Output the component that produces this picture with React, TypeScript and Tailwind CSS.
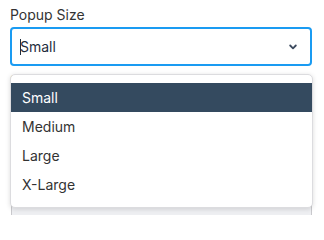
import React from "react";

export default function App() {
  const options = ["Small", "Medium", "Large", "X-Large"];
  return (
    <div
      className="relative h-[215px] w-[324px] overflow-hidden bg-white"
      style={{ fontFamily: "Inter, 'Liberation Sans', sans-serif" }}
    >
      <div className="flex flex-col pl-[10px] pt-[5px]">
        <div className="text-[14px] leading-[20px] text-[#333333]">Popup Size</div>
        <div className="mt-[2px] flex h-[39px] w-[302px] items-center rounded-[4px] border-2 border-[#1a9bf2] pl-[8px] pr-[13px]">
          <span className="mr-[-1px] h-[16px] w-[1px] bg-[#1f2d3d]" />
          <span className="flex-1 text-[14px] leading-[20px] text-[#1f2d3d]">Small</span>
          <svg width="8" height="6" viewBox="0 0 8 6" className="mt-[1px]">
            <path d="M1.2 1.5 L4 4.3 L6.8 1.5" fill="none" stroke="#3d4b5f" strokeWidth="1.8" strokeLinecap="round" strokeLinejoin="round" />
          </svg>
        </div>
        <div className="mt-[5px] text-[14px] leading-[20px] text-[#333333]">Select Theme</div>
        <div className="ml-[1px] mt-[3px] h-[160px] w-[301px] rounded-[4px] border border-[#c9c9cd] bg-[#eeeff2]" />
      </div>

      <div className="absolute left-[10px] top-[74px] w-[303px] rounded-[5px] border border-[#dcdcdf] bg-white py-[8px] shadow-[0_1px_5px_rgba(0,0,0,0.14)]">
        {options.map((o, i) => (
          <div
            key={o}
            className={
              i === 0
                ? "flex h-[29px] items-center bg-[#344a5f] pl-[11px] text-[14px] text-white"
                : "flex h-[29px] items-center pl-[11px] text-[14px] text-[#333333]"
            }
          >
            {o}
          </div>
        ))}
      </div>
    </div>
  );
}
